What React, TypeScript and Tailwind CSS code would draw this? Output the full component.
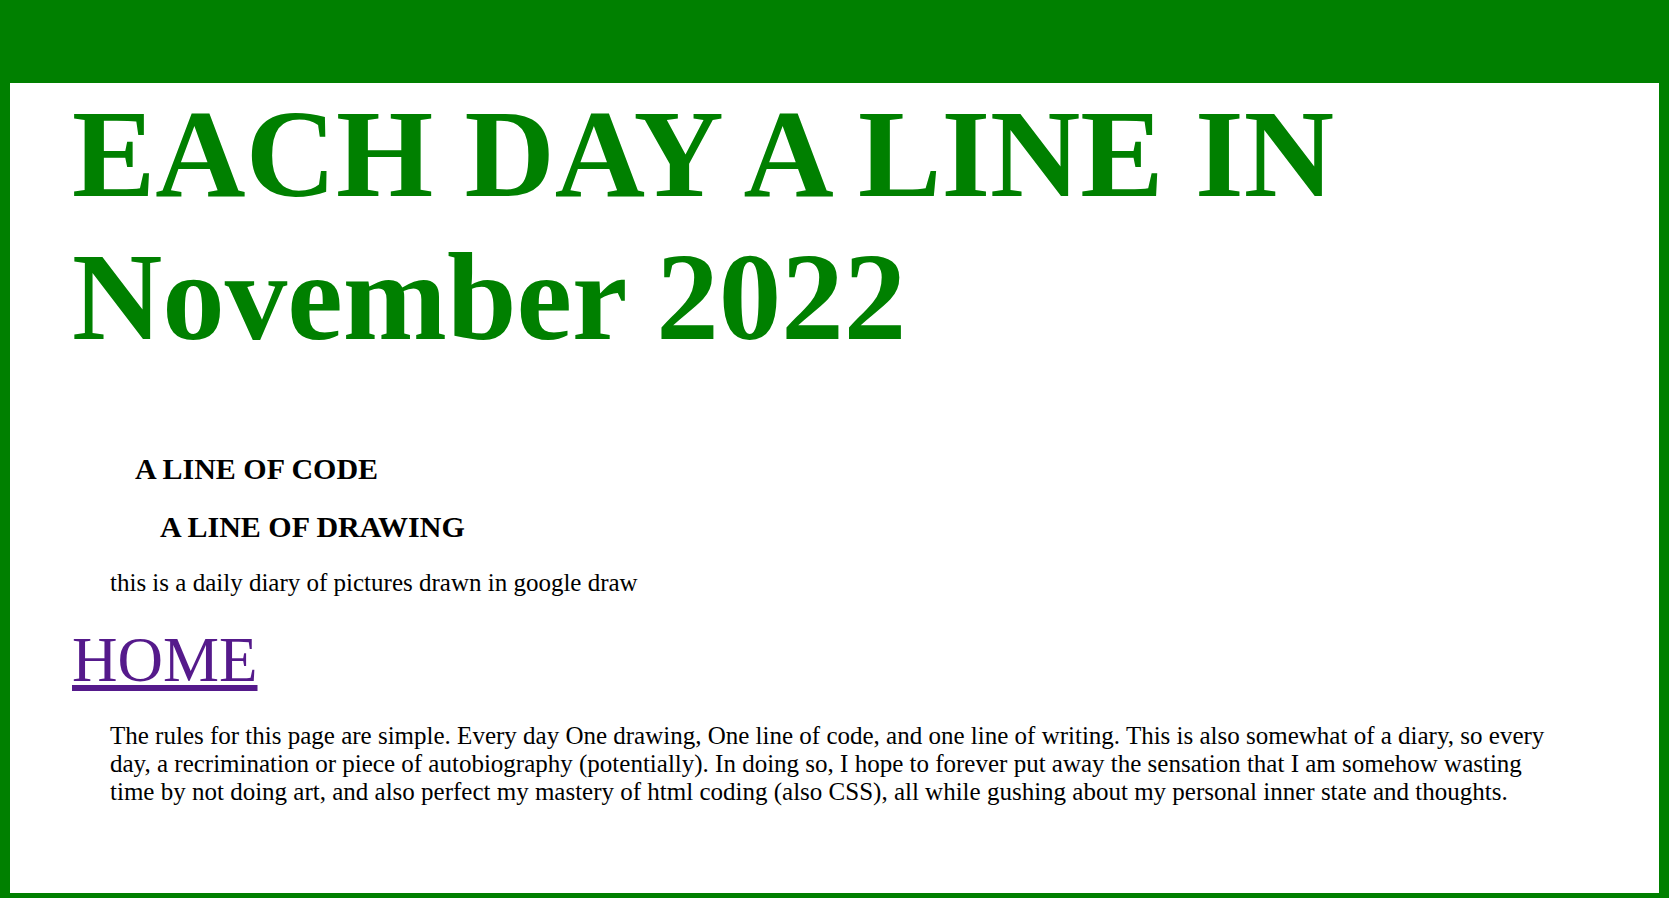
export default function App() {
  return (
    <div className="box-border flex h-[898px] flex-col border-[10px] border-t-[83px] border-b-[5px] border-[#008000] bg-white font-['Liberation_Serif',serif] text-black">
      <h1 className="ml-[62px] text-[125px] font-bold leading-[normal] text-[#008000]">
        EACH DAY A LINE IN
        <br />
        November 2022
      </h1>

      <h3 className="mt-[83px] ml-[125px] text-[30px] font-bold leading-[normal]">A LINE OF CODE</h3>
      <h3 className="mt-[24px] ml-[150px] text-[30px] font-bold leading-[normal]">A LINE OF DRAWING</h3>

      <p className="mt-[25px] ml-[100px] text-[25px] leading-[normal]">
        this is a daily diary of pictures drawn in google draw
      </p>

      <a
        href="#"
        className="mt-[27px] ml-[62px] w-fit text-[63px] leading-[normal] text-[#551a8b] underline decoration-[6px] underline-offset-[4px]"
      >
        HOME
      </a>

      <p className="mt-[25px] mx-[100px] text-[25px] leading-[normal]">
        The rules for this page are simple. Every day One drawing, One line of code, and one line of writing. This is
        also somewhat of a diary, so every day, a recrimination or piece of autobiography (potentially). In doing so, I
        hope to forever put away the sensation that I am somehow wasting time by not doing art, and also perfect my
        mastery of html coding (also CSS), all while gushing about my personal inner state and thoughts.
      </p>
    </div>
  );
}
